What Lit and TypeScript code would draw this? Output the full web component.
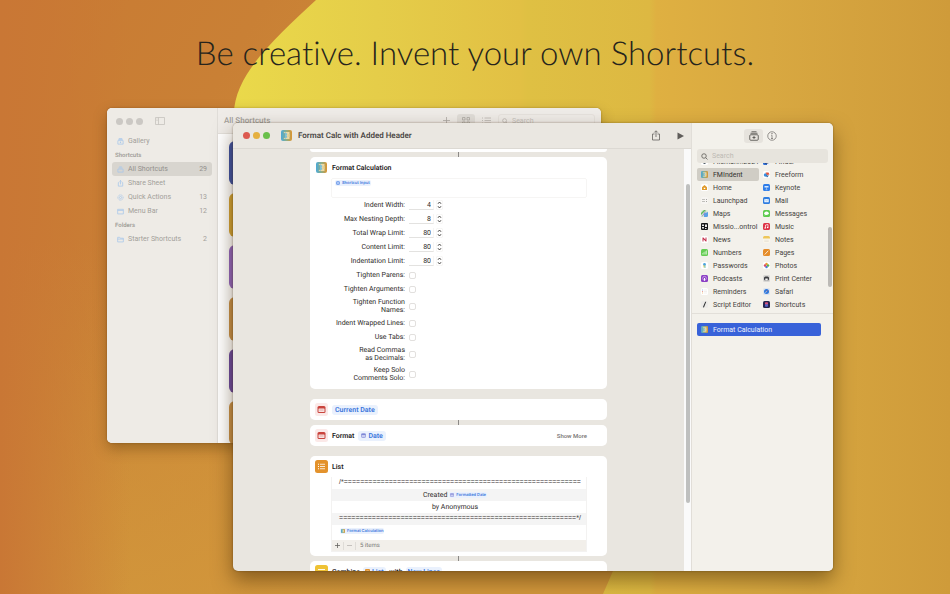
import { LitElement, html, css, svg, type TemplateResult } from "lit";
import { customElement } from "lit/decorators.js";
import { classMap } from "lit/directives/class-map.js";

const fmIcon = (size: number) => html`<svg width=${size} height=${size} viewBox="0 0 22 22" aria-hidden="true">
  <defs><linearGradient id="fm" x1="0" x2="1"><stop offset="0" stop-color="#4aa9d8"/><stop offset=".5" stop-color="#8fae86"/><stop offset="1" stop-color="#dd952f"/></linearGradient></defs>
  <rect width="22" height="22" rx="4" fill="url(#fm)"/>
  <path d="M5 4h12v14H5l4-4V8z" fill="#ecd9a6"/><path d="M8 4l5 4-2 3 2 3-5 4z" fill="#7fc0d6"/><path d="M13 8h4v6h-4z" fill="#e5cf92"/>
</svg>`;

const calendarIcon = html`<svg width="13" height="13" viewBox="0 0 26 26" aria-hidden="true">
  <rect width="26" height="26" rx="5" fill="#fbe9e8"/>
  <rect x="5" y="6" width="16" height="14" rx="3" fill="#c9433c"/>
  <rect x="7" y="11" width="12" height="7" rx="1" fill="#f7e3e1"/>
  <path d="M9 14h8" stroke="#dc9590" stroke-width="1.500"/>
</svg>`;

const listIcon = (size: number) => html`<svg width=${size} height=${size} viewBox="0 0 26 26" aria-hidden="true">
  <rect width="26" height="26" rx="5" fill="#e3922c"/>
  <path d="M10 8.500h10M10 13h10M10 17.500h10" stroke="#fff" stroke-width="1.600"/>
  <path d="M6 8.500h2M6 13h2M6 17.500h2" stroke="#fff" stroke-width="2"/>
</svg>`;

const textIcon = html`<svg width="13" height="13" viewBox="0 0 26 26" aria-hidden="true">
  <rect width="26" height="26" rx="5" fill="#efc234"/>
  <path d="M6 9h14M6 13h14M6 17h8" stroke="#fff" stroke-width="1.800"/>
</svg>`;

const chipDate = (size: number) => html`<svg width=${size} height=${size} viewBox="0 0 10 10" aria-hidden="true">
  <rect x="1" y="1" width="8" height="8" rx="1.500" fill="#c9cdf0" stroke="#8d96dc" stroke-width="1.500"/><path d="M1 3h8" stroke="#7d87d6" stroke-width="2"/>
</svg>`;

const chipInput = html`<svg width="4" height="4" viewBox="0 0 10 10" aria-hidden="true">
  <rect x="1" y="1" width="8" height="8" rx="3" fill="#a9c4f3" stroke="#5b8ee8" stroke-width="2"/>
</svg>`;

const searchIcon = (size: number, color: string) => html`<svg width=${size} height=${size} viewBox="0 0 14 14" fill="none" stroke=${color} stroke-width="1.600" aria-hidden="true">
  <circle cx="6" cy="6" r="4.500"/><path d="M9.500 9.500L13 13"/>
</svg>`;

const shareIcon = html`<svg width="10" height="11" viewBox="0 0 20 22" fill="none" stroke="#6b6966" stroke-width="1.700" aria-hidden="true">
  <path d="M7 8H3v12h14V8h-4M10 14V2M6.500 5L10 1.500 13.500 5"/>
</svg>`;

const sideGlyphs: Record<string, TemplateResult<2>> = {
  gallery: svg`<path d="M4 1h8M3 3.500h10M2 6h12v8H2zM6.500 10h3M8 8.500v3"/>`,
  stack: svg`<path d="M5 2h6M3.500 4.500h9M2 7h12v7H2z"/>`,
  share: svg`<path d="M5 6H3v8h10V6h-2M8 10V1M5.500 3.500L8 1l2.500 2.500"/>`,
  gear: svg`<circle cx="8" cy="8" r="6" stroke-dasharray="2.500 1"/><circle cx="8" cy="8" r="2.500"/>`,
  menubar: svg`<path d="M1.500 3h13v10.500h-13zM1.500 5.500h13"/>`,
  folder: svg`<path d="M1.500 13.500V3H6l1.500 2h7v8.500zM1.500 7h13"/>`,
};

const appGlyphs: Record<string, TemplateResult<2>> = {
  fileman: svg`<rect width="14" height="14" rx="3" fill="#fff"/><path d="M5 9h4v3H5z" fill="#55606a"/>`,
  finder: svg`<rect width="14" height="14" rx="3" fill="#e7eefb"/><path d="M0 0h8v14H3a3 3 0 0 1-3-3z" fill="#2f6fd6"/><path d="M3 10q4 3 8 0" stroke="#223" fill="none"/>`,
  freeform: svg`<rect width="14" height="14" rx="3" fill="#fff"/><circle cx="5" cy="8" r="3.500" fill="#3a8ee0"/><path d="M5 3h6l2 4-5 1z" fill="#e2563c"/><path d="M6 9h6l-4 4z" fill="#2b5f96"/>`,
  home: svg`<rect width="14" height="14" rx="3" fill="#fff"/><path d="M7 2l5 4.500V12H2V6.500z" fill="#e09a2a"/><path d="M5.500 7.500h3V10h-3z" fill="#fff"/>`,
  keynote: svg`<rect width="14" height="14" rx="3" fill="#2f7de8"/><path d="M3 4h8v3H3z" fill="#d8e9fd"/><path d="M7 7v4M5 11.500h4" stroke="#d8e9fd"/>`,
  launchpad: svg`<rect width="14" height="14" rx="3" fill="#f7f5f2"/><path d="M3 5h2M3 9h2M7 5h1M10 5h1.500M7 9h1M10 9h1.500" stroke="#8b8a86" stroke-width="2"/>`,
  mail: svg`<rect width="14" height="14" rx="3" fill="#2f7de0"/><rect x="2.500" y="4" width="9" height="6.500" rx="1" fill="#eaf3fd"/><path d="M3 4.500l4 3 4-3" stroke="#6ca8ea" fill="none"/>`,
  maps: svg`<rect width="14" height="14" rx="3" fill="#d9ecd2"/><path d="M0 6L6 0h4L0 10z" fill="#5fb55a"/><path d="M6 14V7l8-3v7a3 3 0 0 1-3 3z" fill="#5c9fe6"/><path d="M2 13L9 3" stroke="#8a6fc4" stroke-width="1.500"/>`,
  messages: svg`<rect width="14" height="14" rx="3" fill="#5dcb4f"/><ellipse cx="7" cy="6.500" rx="4.500" ry="3.500" fill="#fff"/><path d="M4 8l-1 3 3-1.500z" fill="#fff"/>`,
  mission: svg`<rect width="14" height="14" rx="2" fill="#16181a"/><path d="M2 3h4v3H2zM8 3h4v5H8zM2 8h4v3H2zM8 10h3v2H8z" fill="#e8e8e8"/>`,
  music: svg`<rect width="14" height="14" rx="3" fill="#dd3346"/><path d="M5 10V4l5-1v6" stroke="#fff" fill="none" stroke-width="1.400"/><circle cx="4.300" cy="10" r="1.500" fill="#fff"/><circle cx="9.300" cy="9.200" r="1.500" fill="#fff"/>`,
  news: svg`<rect width="14" height="14" rx="3" fill="#fff"/><path d="M3 3v8h2V6.500L9.500 11H11V3H9v4.500L4.800 3z" fill="#c4304c"/>`,
  notes: svg`<rect width="14" height="14" rx="3" fill="#faf6ea"/><path d="M0 5V3a3 3 0 0 1 3-3h8a3 3 0 0 1 3 3v2z" fill="#edc65a"/><path d="M2.500 8.500h9M2.500 11h9" stroke="#ded9cb"/>`,
  numbers: svg`<rect width="14" height="14" rx="3" fill="#66cc55"/><path d="M3.500 11V8M6 11V6M8.500 11V4.500M11 11V3" stroke="#e7fbe2" stroke-width="1.300"/>`,
  pages: svg`<rect width="14" height="14" rx="3" fill="#e58d2a"/><path d="M3.500 11L10.500 3.500" stroke="#fff" stroke-width="1.600"/>`,
  passwords: svg`<rect width="14" height="14" rx="3" fill="#fff"/><circle cx="7" cy="5" r="2.800" fill="#4aa3dd"/><path d="M6 7h3v5H7z" fill="#79c7b5"/><path d="M5 6h1.500v5H5z" fill="#e7c84e"/>`,
  photos: svg`<rect width="14" height="14" rx="3" fill="#fff"/><circle cx="7" cy="4" r="2.500" fill="#ee9a2e"/><circle cx="10" cy="7" r="2.500" fill="#5fb648"/><circle cx="7" cy="10" r="2.500" fill="#477fd8"/><circle cx="4" cy="7" r="2.500" fill="#d84a6a"/>`,
  podcasts: svg`<rect width="14" height="14" rx="3" fill="#8b3fc4"/><circle cx="7" cy="6.500" r="3.800" fill="none" stroke="#e9d2f7" stroke-width="1.200"/><path d="M7 6v5.500" stroke="#fff" stroke-width="2"/>`,
  print: svg`<rect width="14" height="14" rx="3" fill="#d9d8d5"/><rect x="2" y="3" width="10" height="8" rx="3" fill="#3c3d40"/><rect x="4.500" y="7" width="5" height="4" fill="#f3f3f3"/>`,
  reminders: svg`<rect width="14" height="14" rx="3" fill="#fff"/><path d="M2 4h1.500" stroke="#5a8fe0" stroke-width="1.500"/><path d="M2 7h1.500" stroke="#e0584a" stroke-width="1.500"/><path d="M2 10h1.500" stroke="#e8a53c" stroke-width="1.500"/><path d="M5.500 4H12M5.500 7H12M5.500 10H12" stroke="#e5e3df"/>`,
  safari: svg`<rect width="14" height="14" rx="3" fill="#dde4ee"/><circle cx="7" cy="7" r="5" fill="#2e78dc"/><path d="M10 4L6.300 6.300 7.700 7.700z" fill="#e55a4a"/><path d="M4 10l2.300-3.700 1.400 1.400z" fill="#fff"/>`,
  script: svg`<rect width="14" height="14" rx="3" fill="#ecebe8"/><path d="M10.500 1.500L6 12.500l-2 .5.500-2.500 4-9z" fill="#2e2f31"/>`,
  shortcuts: svg`<rect width="14" height="14" rx="3" fill="#262550"/><rect x="4" y="2.500" width="6" height="5" rx="1.500" fill="#d8527c"/><rect x="4" y="6.500" width="6" height="5" rx="1.500" fill="#5a6fe0" fill-opacity=".85"/>`,
  blue: svg`<rect width="14" height="14" rx="3" fill="#7fb4d8"/>`,
  dark: svg`<rect width="14" height="14" rx="3" fill="#55534f"/>`,
};

const appIcon = (key: string) =>
  key === "fmindent" ? fmIcon(7) : html`<svg width="7" height="7" viewBox="0 0 14 14" aria-hidden="true">${appGlyphs[key]}</svg>`;

const apps: [string, string][] = [
  ["fileman", "Fileman...2021"], ["finder", "Finder"],
  ["fmindent", "FMIndent"], ["freeform", "Freeform"],
  ["home", "Home"], ["keynote", "Keynote"],
  ["launchpad", "Launchpad"], ["mail", "Mail"],
  ["maps", "Maps"], ["messages", "Messages"],
  ["mission", "Missio...ontrol"], ["music", "Music"],
  ["news", "News"], ["notes", "Notes"],
  ["numbers", "Numbers"], ["pages", "Pages"],
  ["passwords", "Passwords"], ["photos", "Photos"],
  ["podcasts", "Podcasts"], ["print", "Print Center"],
  ["reminders", "Reminders"], ["safari", "Safari"],
  ["script", "Script Editor"], ["shortcuts", "Shortcuts"],
  ["blue", ""], ["dark", ""],
];

const base = css`
  * { box-sizing: border-box; }
  button, input { font: inherit; color: inherit; margin: 0; padding: 0; border: 0; background: none; border-radius: 0; }
  button { display: flex; align-items: center; justify-content: center; }
  svg { display: block; flex: none; }
  h1, h2, h3, p, ul { margin: 0; padding: 0; font-weight: inherit; font-size: inherit; }
  ul { list-style: none; }
  .lights { display: flex; gap: 3px; }
  .light { width: 7px; height: 7px; border-radius: 50%; }
`;

@customElement("library-window")
class LibraryWindow extends LitElement {
  static styles = [base, css`
    :host { display: flex; border-radius: 5px; overflow: hidden; background: #fff; color: #a29f9a; }
    .side { width: 111px; flex: none; background: #eeebe6; border-right: 1px solid #e0ddd8; padding: 9px 5px 0 5px; }
    .bar { display: flex; align-items: center; gap: 12px; height: 8px; padding-left: 4px; margin-bottom: 9px; }
    .light { background: #cbc8c4; }
    .row { display: flex; align-items: center; width: 100%; height: 14px; gap: 4px; padding: 0 5px 0 5px; border-radius: 3px; text-align: left; }
    .row.on { background: #d8d5cf; color: #93908c; }
    .name { flex: 1; }
    .group { font-size: 6px; font-weight: 600; line-height: 8px; padding: 4px 0 2px 3px; }
    .main { flex: 1; min-width: 0; }
    .top { display: flex; align-items: center; height: 26px; background: #efece8; border-bottom: 1px solid #e2dfda; padding: 0 6px; gap: 7px; }
    .title { flex: 1; font-size: 8px; font-weight: 500; }
    .tool { width: 18px; height: 13px; border-radius: 3px; }
    .tool.on { background: #e0ddd8; }
    .find { display: flex; align-items: center; gap: 4px; width: 97px; height: 13px; padding: 0 3px; border: 1px solid #e5e2dd; border-radius: 3px; }
    .find input { width: 70px; }
    .find input::placeholder { color: #c5c2bd; opacity: 1; }
    .cards { display: flex; flex-direction: column; gap: 8px; padding: 7px 11px; }
    .card { height: 44px; border-radius: 6px; }
    .c0 { background: #3d53a8; } .c1 { background: #d3a436; } .c2 { background: #9166c2; }
    .c3 { background: #c8924a; } .c4 { background: #6a4aa3; } .c5 { background: #c8924a; }
  `];

  private item(icon: string, label: string, count = "", on = false) {
    return html`<button class=${classMap({ row: true, on })}>
      <svg width="7" height="7" viewBox="0 0 16 16" fill="none" stroke="#a9c8ea" stroke-width="1.800" aria-hidden="true">${sideGlyphs[icon]}</svg>
      <span class="name">${label}</span><span>${count}</span>
    </button>`;
  }

  render() {
    return html`
      <nav class="side">
        <div class="bar">
          <div class="lights"><i class="light"></i><i class="light"></i><i class="light"></i></div>
          <svg width="10" height="8" viewBox="0 0 20 16" fill="none" stroke="#c3c0bb" stroke-width="1.500" aria-hidden="true"><path d="M1 1h18v14H1zM7 1v14M3 4h2M3 7h2"/></svg>
        </div>
        ${this.item("gallery", "Gallery")}
        <h3 class="group">Shortcuts</h3>
        ${this.item("stack", "All Shortcuts", "29", true)}
        ${this.item("share", "Share Sheet")}
        ${this.item("gear", "Quick Actions", "13")}
        ${this.item("menubar", "Menu Bar", "12")}
        <h3 class="group">Folders</h3>
        ${this.item("folder", "Starter Shortcuts", "2")}
      </nav>
      <div class="main">
        <div class="top">
          <h2 class="title">All Shortcuts</h2>
          <button aria-label="New shortcut"><svg width="7" height="7" viewBox="0 0 14 14" stroke="#a9a6a1" stroke-width="1.500"><path d="M7 0v14M0 7h14"/></svg></button>
          <button class="tool on" aria-label="Grid view"><svg width="8" height="8" viewBox="0 0 16 16" fill="none" stroke="#a9a6a1" stroke-width="1.500"><path d="M1 1h5v5H1zM10 1h5v5h-5zM1 10h5v5H1zM10 10h5v5h-5z"/></svg></button>
          <button aria-label="List view"><svg width="9" height="7" viewBox="0 0 18 14" stroke="#b5b2ad" stroke-width="1.500"><path d="M0 2h2M0 7h2M0 12h2M5 2h13M5 7h13M5 12h13"/></svg></button>
          <label class="find">${searchIcon(6, "#b5b2ad")}<input type="search" aria-label="Search shortcuts" placeholder="Search"></label>
        </div>
        <div class="cards">${[0, 1, 2, 3, 4, 5].map((i) => html`<div class="card c${i}"></div>`)}</div>
      </div>`;
  }
}

@customElement("action-library")
class ActionLibrary extends LitElement {
  static styles = [base, css`
    :host { display: flex; flex-direction: column; background: #f3f1eb; color: #454340; border-left: 1px solid #e1ded8; }
    .tabs { display: flex; justify-content: center; align-items: center; gap: 4px; height: 26px; flex: none; padding-right: 4px; }
    .tab.on { width: 19px; height: 14px; border-radius: 3px; background: #e6e3dd; }
    .find { display: flex; align-items: center; gap: 4px; height: 14px; flex: none; margin: 0 5px; padding: 0 4px; border-radius: 3px; background: #e7e4dd; }
    .find input { flex: 1; min-width: 0; }
    .find input::placeholder { color: #bdbab4; opacity: 1; }
    .scroll { display: flex; height: 151px; flex: none; overflow: hidden; border-bottom: 1px solid #e2dfd9; }
    .apps { display: grid; grid-template-columns: 62px 62px; align-content: end; align-self: end; flex: 1; margin: 0 0 -11px 5px; }
    .app { display: flex; align-items: center; justify-content: flex-start; gap: 5px; width: 100%; height: 13px; padding: 0 4px; border-radius: 2px; white-space: nowrap; text-align: left; }
    .app.on { background: #d0cdc5; color: #33312f; }
    .thumb { width: 4px; height: 60px; margin: 64px 1px 0 0; border-radius: 2px; background: #bcbab6; }
    .action { display: flex; align-items: center; justify-content: flex-start; gap: 5px; height: 13px; margin: 9px 12px 0 5px; padding: 0 4px; border-radius: 2px; background: #3862d9; color: #eef2fd; }
  `];

  render() {
    return html`
      <div class="tabs">
        <button class="tab on" aria-label="Action library"><svg width="10" height="10" viewBox="0 0 20 20" fill="none" stroke="#4c4a47" stroke-width="1.600"><path d="M5 1.500h10M3 4.500h14"/><rect x="1.500" y="7.500" width="17" height="11" rx="2"/><path d="M10 10v6M7 13h6"/></svg></button>
        <button class="tab" aria-label="Shortcut details"><svg width="10" height="10" viewBox="0 0 20 20" fill="none" stroke="#6b6966" stroke-width="1.400"><circle cx="10" cy="10" r="8.500"/><path d="M8.500 8.500H10V15M8 15h4"/><circle cx="10" cy="5.500" r=".6" fill="#6b6966"/></svg></button>
      </div>
      <label class="find">${searchIcon(7, "#5d5b57")}<input type="search" aria-label="Search actions" placeholder="Search"></label>
      <div class="scroll">
        <div class="apps">${apps.map(([key, name]) => html`<button class=${classMap({ app: true, on: key === "fmindent" })}>${appIcon(key)}<span>${name}</span></button>`)}</div>
        <div class="thumb"></div>
      </div>
      <button class="action">${fmIcon(7)}<span>Format Calculation</span></button>`;
  }
}

const limits: [string, string][] = [
  ["Indent Width:", "4"], ["Max Nesting Depth:", "8"], ["Total Wrap Limit:", "80"], ["Content Limit:", "80"], ["Indentation Limit:", "80"],
];
const toggles: string[][] = [
  ["Tighten Parens:"], ["Tighten Arguments:"], ["Tighten Function", "Names:"], ["Indent Wrapped Lines:"], ["Use Tabs:"],
  ["Read Commas", "as Decimals:"], ["Keep Solo", "Comments Solo:"],
];

@customElement("editor-window")
class EditorWindow extends LitElement {
  static styles = [base, css`
    :host { display: flex; border-radius: 5px; overflow: hidden; background: #e9e6e0; color: #2f2d2b; }
    .left { flex: 1; min-width: 0; display: flex; flex-direction: column; }
    .bar { display: flex; align-items: center; height: 26px; flex: none; padding: 0 6px 0 10px; border-bottom: 1px solid #dcd9d3; background: #eae7e1; }
    .red { background: #dc5a50; } .amber { background: #e5b03f; } .green { background: #69c04b; }
    .title { display: flex; align-items: center; gap: 6px; flex: 1; margin-left: 11px; font-size: 8px; font-weight: 600; color: #4a4845; }
    .tools { display: flex; align-items: center; gap: 16px; }
    .work { flex: 1; min-height: 0; display: flex; overflow: hidden; }
    .flow { flex: 1; min-width: 0; padding: 0 77px; }
    .track { width: 7px; flex: none; background: #fafafa; padding: 35px 1px 0 2px; }
    .thumb { height: 319px; border-radius: 2px; background: #bfc0bf; }
    .card { background: #fff; border-radius: 5px; }
    .card.cut { height: 3px; border-radius: 0 0 5px 5px; }
    .link { width: 1px; height: 5px; margin: 0 auto; background: #8b8986; }
    .gap { height: 10px; }
    .head { display: flex; align-items: center; height: 21px; padding: 0 20px 0 5px; font-weight: 600; color: #1f1e1d; }
    .mark { width: 12px; margin-right: 5px; display: flex; justify-content: center; flex: none; }
    .mark svg { margin: 0 -1px; }
    .chip { display: inline-flex; align-items: center; gap: 2px; height: 10px; padding: 0 3px; border-radius: 3px; background: #eaf1fd; color: #3a76dc; font-weight: 600; }
    .chip.small { height: 6px; font-family: Inter, sans-serif; font-size: 4px; line-height: 6px; padding: 0 1px; border-radius: 2px; }
    .more { margin-left: auto; font-size: 6px; font-weight: 500; color: #777572; }
    .word { margin-right: 4px; }
    .combine { gap: 2px; }
    .combine .mark { margin-right: 3px; }
    .combine .word { margin-right: 1px; }
    .combine .chip { padding: 0 2px; }
    .input { height: 20px; margin: 0 20px 0 21px; padding: 1px 3px; border: 1px solid #f6f5f4; border-radius: 2px; display: flex; align-items: flex-start; }
    .params { padding-bottom: 5px; }
    .field { display: flex; align-items: center; min-height: 14px; line-height: 8px; }
    .field.two { min-height: 20px; }
    .label { width: 95px; margin-right: 4px; text-align: right; }
    .line { display: block; }
    .num { width: 25px; height: 10px; margin-right: 2px; padding-right: 2px; text-align: right; border-right: 1px solid #f6f5f4; border-bottom: 1px solid #e3e2e0; appearance: textfield; -moz-appearance: textfield; }
    .num::-webkit-inner-spin-button { display: none; }
    .check { appearance: none; width: 7px; height: 7px; border: 1px solid #e2e0de; border-radius: 2px; }
    .list { margin: 0 20px 0 21px; border: 1px solid #f3f2f1; border-top: 0; }
    .item { display: flex; align-items: center; justify-content: center; gap: 2px; height: 12px; padding-right: 8px; white-space: nowrap; }
    .item:nth-child(even) { background: #f4f4f4; }
    .item.rule { font-family: "Liberation Sans", sans-serif; padding: 0 0 0 2px; }
    .item.last { height: 15px; justify-content: flex-start; padding: 0 0 4px 8px; }
    .foot { display: flex; align-items: center; height: 11px; background: #f2efea; font-size: 6px; color: #7b7976; }
    .foot button { width: 12px; height: 8px; border-right: 1px solid #dfdcd7; }
    .count { margin-left: 4px; }
    .end { height: 4px; }
    action-library { width: 142px; flex: none; }
  `];

  render() {
    const eq = "=".repeat(58);
    return html`
      <div class="left">
        <header class="bar">
          <div class="lights"><i class="light red"></i><i class="light amber"></i><i class="light green"></i></div>
          <h2 class="title">${fmIcon(11)}<span>Format Calc with Added Header</span></h2>
          <div class="tools">
            <button aria-label="Share">${shareIcon}</button>
            <button aria-label="Run"><svg width="8" height="8" viewBox="0 0 16 16" fill="#5f5d5a"><path d="M1 1l13 7L1 15z"/></svg></button>
          </div>
        </header>
        <div class="work">
          <div class="flow">
            <div class="card cut"></div>
            <div class="link"></div>
            <section class="card">
              <h3 class="head"><span class="mark">${fmIcon(11)}</span>Format Calculation</h3>
              <div class="input"><span class="chip small">${chipInput}Shortcut Input</span></div>
              <div class="params">
                ${limits.map(([label, value], i) => html`<div class="field">
                  <label class="label" for="n${i}">${label}</label>
                  <input class="num" id="n${i}" type="number" .value=${value}>
                  <button aria-label="Step ${label}"><svg width="7" height="10" viewBox="0 0 14 20" fill="none" stroke="#444240" stroke-width="2"><rect x=".5" y=".5" width="13" height="19" rx="4" stroke="#ecebe9" stroke-width="1"/><path d="M4 7.500L7 4l3 3.500M4 12.500L7 16l3-3.500"/></svg></button>
                </div>`)}
                ${toggles.map((lines, i) => html`<div class=${classMap({ field: true, two: lines.length > 1 })}>
                  <label class="label" for="t${i}">${lines.map((l) => html`<span class="line">${l}</span>`)}</label>
                  <input class="check" id="t${i}" type="checkbox">
                </div>`)}
              </div>
            </section>
            <div class="gap"></div>
            <section class="card"><h3 class="head"><span class="mark">${calendarIcon}</span><span class="chip">Current Date</span></h3></section>
            <div class="link"></div>
            <section class="card"><h3 class="head"><span class="mark">${calendarIcon}</span><span class="word">Format</span><span class="chip">${chipDate(5)}Date</span><button class="more">Show More</button></h3></section>
            <div class="gap"></div>
            <section class="card">
              <h3 class="head"><span class="mark">${listIcon(13)}</span>List</h3>
              <div class="list">
                <ul>
                  <li class="item rule">/*${eq}</li>
                  <li class="item">Created <span class="chip small">${chipDate(4)}Formatted Date</span></li>
                  <li class="item">by Anonymous</li>
                  <li class="item rule">${eq}*/</li>
                  <li class="item last"><span class="chip small">${fmIcon(4)}Format Calculation</span></li>
                </ul>
                <div class="foot">
                  <button aria-label="Add item"><svg width="5" height="5" viewBox="0 0 10 10" stroke="#5f5d5a" stroke-width="1.500"><path d="M5 0v10M0 5h10"/></svg></button>
                  <button aria-label="Remove item"><svg width="5" height="5" viewBox="0 0 10 10" stroke="#b5b2ad" stroke-width="1.500"><path d="M0 5h10"/></svg></button>
                  <span class="count">5 items</span>
                </div>
              </div>
              <div class="end"></div>
            </section>
            <div class="link"></div>
            <section class="card"><h3 class="head combine"><span class="mark">${textIcon}</span><span class="word">Combine</span><span class="chip">${listIcon(5)}List</span><span class="word">&nbsp;with</span><span class="chip">New Lines</span></h3></section>
          </div>
          <div class="track"><div class="thumb"></div></div>
        </div>
      </div>
      <action-library></action-library>`;
  }
}

@customElement("app-root")
class AppRoot extends LitElement {
  static styles = [base, css`
    :host { display: block; position: relative; height: 100vh; overflow: hidden; font: 7px/10px Roboto, Inter, sans-serif; text-rendering: geometricPrecision; background: #cf9038; }
    .wall { position: absolute; inset: 0; width: 100%; height: 100%; }
    .headline { position: relative; padding-top: 32px; text-align: center; font: 300 33px/42px Lato, "Open Sans", sans-serif; font-variant-ligatures: none; color: #26241c; }
    library-window { position: absolute; left: 107px; right: 349px; top: 108px; bottom: 151px; box-shadow: 0 6px 14px rgba(70, 40, 0, .35), 0 0 2px rgba(70, 40, 0, .4); }
    editor-window { position: absolute; left: 233px; right: 117px; top: 123px; bottom: 23px; box-shadow: 0 9px 20px rgba(60, 35, 0, .5), 0 0 2px rgba(60, 35, 0, .5); }
  `];

  render() {
    return html`
      <svg class="wall" viewBox="0 0 950 594" preserveAspectRatio="none" aria-hidden="true">
        <defs>
          <linearGradient id="rust" gradientUnits="userSpaceOnUse" x1="0" y1="0" x2="560" y2="330">
            <stop offset="0" stop-color="#c97a33"/><stop offset=".35" stop-color="#c98035"/><stop offset="1" stop-color="#d2973d"/>
          </linearGradient>
          <linearGradient id="low" x1="0" y1="0" x2="0" y2="1">
            <stop offset=".4" stop-color="#d2973b" stop-opacity="0"/><stop offset="1" stop-color="#d2973b" stop-opacity=".8"/>
          </linearGradient>
          <linearGradient id="edge"><stop offset="0" stop-color="#c97735"/><stop offset="1" stop-color="#c97735" stop-opacity="0"/></linearGradient>
          <linearGradient id="sun" gradientUnits="userSpaceOnUse" x1="234" y1="0" x2="950" y2="0">
            <stop offset="0" stop-color="#ead94a"/><stop offset=".2" stop-color="#e5cd49"/><stop offset=".4" stop-color="#e2c044"/>
            <stop offset=".41" stop-color="#dfc043"/><stop offset=".58" stop-color="#ddb842"/><stop offset=".59" stop-color="#dfb041"/>
            <stop offset=".75" stop-color="#d8a841"/><stop offset="1" stop-color="#cf9b3a"/>
          </linearGradient>
        </defs>
        <rect width="950" height="594" fill="url(#rust)"/>
        <rect width="950" height="594" fill="url(#low)"/>
        <rect width="130" height="594" fill="url(#edge)"/>
        <path d="M316 0C275 38 234 75 234 114C234 300 640 430 613 571L603 594H950V0z" fill="url(#sun)"/>
      </svg>
      <h1 class="headline">Be creative. Invent your own Shortcuts.</h1>
      <library-window></library-window>
      <editor-window></editor-window>`;
  }
}
